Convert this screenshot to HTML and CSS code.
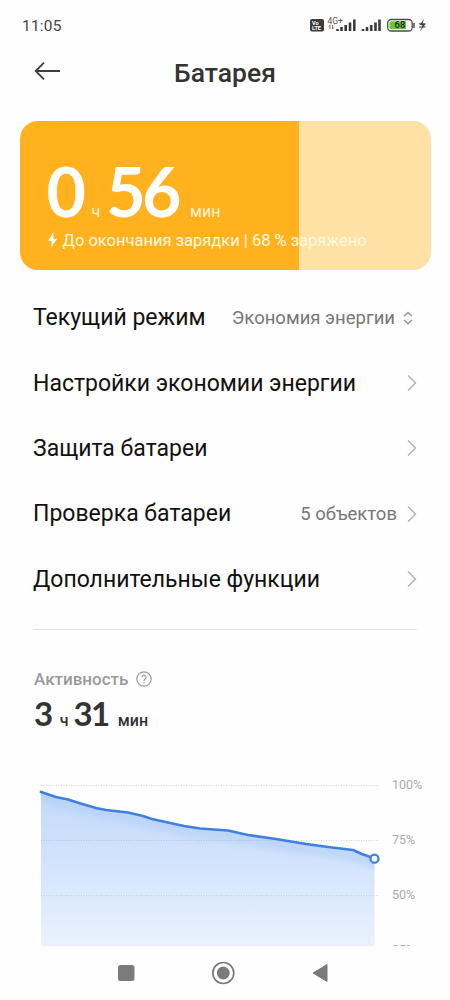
FILE: index.html
```html
<!DOCTYPE html>
<html lang="ru">
<head>
<meta charset="utf-8">
<title>Батарея</title>
<link rel="stylesheet" href="styles.css">
</head>
<body>
<div class="screen">
  <header class="status">
    <span class="clock">11:05</span>
    <svg class="status-icons" width="118" height="20" viewBox="0 0 118 20">
      <rect x="0" y="4" width="14" height="12.500" rx="2" fill="#3c3c3c"/>
      <text class="volte" x="2" y="9.700">Vo</text>
      <text class="volte" x="2" y="15.200">LTE</text>
      <text class="net" x="17.500" y="8.500">4G+</text>
      <path d="M20 10v4M18.700 11.300l1.300-1.500M22.500 10v4l1.400-1.600" stroke="#777" fill="none"/>
      <path d="M27.500 16v-2M31.500 16v-4M35.700 16V10M40 16V7.500M44.300 16V4.500M53 16v-2M57 16v-4M61.200 16V10M65.500 16V7.500M69.500 16V4.500" stroke="#3c3c3c" stroke-width="2.600"/>
      <rect x="77.700" y="4.500" width="24.500" height="11.500" rx="3.500" fill="#fff" stroke="#4b4b4b" stroke-width="1.300"/>
      <path d="M81.500 6.300H96v8H81.500a2 2 0 0 1-2-2v-4a2 2 0 0 1 2-2z" fill="#66c832"/>
      <path d="M104 8v5" stroke="#4b4b4b" stroke-width="1.500"/>
      <text class="charge" x="90" y="13.300">68</text>
      <path d="M114 4l-4.500 6 3 .3-2.500 6 5.500-7-3-.5z" fill="#444"/>
      <path d="M109 8.800h6.500M109 12h6.500" stroke="#444"/>
    </svg>
  </header>

  <div class="titlebar">
    <svg class="back" width="28" height="20" viewBox="0 0 28 20"><path d="M27 10H3M11 1.700L2.700 10l8.300 8.300" fill="none" stroke="#3d3d3d" stroke-width="1.800"/></svg>
    <h1>Батарея</h1>
  </div>

  <section class="card">
    <div class="time"><span class="num">0</span><span class="unit hour">ч</span><span class="num">56</span><span class="unit min">мин</span></div>
    <div class="state">
      <svg width="11" height="16" viewBox="0 0 11 16"><path d="M6.500 0L1 9h3.700L4 15.500 10 6.700H6.300z" fill="#fff"/></svg>
      <span>До окончания зарядки | 68 % заряжено</span>
    </div>
  </section>

  <nav class="menu">
    <div class="row"><span class="label r1">Текущий режим</span><span class="value v1">Экономия энергии</span><svg class="sort" width="10" height="14" viewBox="0 0 10 14"><path d="M1 5l4-3.600L9 5M1 9l4 3.600L9 9" fill="none" stroke="#8999a3" stroke-width="1.500"/></svg></div>
    <div class="row"><span class="label r2">Настройки экономии энергии</span><svg class="chev" width="10" height="18" viewBox="0 0 10 18"><path d="M1 1.500L8.500 9 1 16.500" fill="none" stroke="#b0b0b0" stroke-width="1.400"/></svg></div>
    <div class="row"><span class="label r3">Защита батареи</span><svg class="chev" width="10" height="18" viewBox="0 0 10 18"><path d="M1 1.500L8.500 9 1 16.500" fill="none" stroke="#b0b0b0" stroke-width="1.400"/></svg></div>
    <div class="row"><span class="label r4">Проверка батареи</span><span class="value v4">5 объектов</span><svg class="chev" width="10" height="18" viewBox="0 0 10 18"><path d="M1 1.500L8.500 9 1 16.500" fill="none" stroke="#b0b0b0" stroke-width="1.400"/></svg></div>
    <div class="row"><span class="label r5">Дополнительные функции</span><svg class="chev" width="10" height="18" viewBox="0 0 10 18"><path d="M1 1.500L8.500 9 1 16.500" fill="none" stroke="#b0b0b0" stroke-width="1.400"/></svg></div>
  </nav>

  <section class="activity">
    <div class="caption"><span>Активность</span>
      <svg width="16" height="16" viewBox="0 0 16 16"><circle cx="8" cy="8" r="7.200" fill="none" stroke="#999" stroke-width="1.200"/><path d="M5.900 6.300a2.100 2.100 0 1 1 3.300 1.700C8.300 8.600 8 9 8 9.900M8 11.200v1.300" fill="none" stroke="#999" stroke-width="1.200"/></svg>
    </div>
    <div class="used"><span class="n">3</span><span class="u uh">ч</span><span class="n">31</span><span class="u um">мин</span></div>
  </section>

  <svg class="chart" width="450" height="176" viewBox="0 770 450 176">
    <defs>
      <linearGradient id="fill" x1="0" y1="792" x2="0" y2="946" gradientUnits="userSpaceOnUse">
        <stop offset="0" stop-color="#c3dafa"/><stop offset=".45" stop-color="#d2e3fc"/><stop offset="1" stop-color="#eaf2fe"/>
      </linearGradient>
      <clipPath id="area"><path d="M41 792L56 797 68 799.500 84 804.500 96 808 106 810 128 812.500 143 816 152 819 168 822.500 184 826 200 828.500 228 830.500 248 835 276 839 306 844 332 847.500 353 850 362 854 374.500 858.500V946H41z"/></clipPath>
      <filter id="soft"><feGaussianBlur stdDeviation="3"/></filter>
    </defs>
    <g clip-path="url(#area)">
      <rect x="41" y="780" width="334" height="166" fill="url(#fill)"/>
      <path d="M36 794L68 803 106 813 128 816 152 822 200 832 228 834 276 843 332 851 353 854 380 864" fill="none" stroke="#aacaf4" stroke-opacity=".45" stroke-width="14" filter="url(#soft)"/>
    </g>
    <path d="M41 785.500H379M41 840.500H379M41 895.500H379" stroke="#8492a5" stroke-opacity=".38" stroke-dasharray="1 1.500"/>
    <path d="M41 792L56 797 68 799.500 84 804.500 96 808 106 810 128 812.500 143 816 152 819 168 822.500 184 826 200 828.500 228 830.500 248 835 276 839 306 844 332 847.500 353 850 362 854 374.500 858.500" fill="none" stroke="#3f80e3" stroke-width="2.700" stroke-linejoin="round" stroke-linecap="round"/>
    <circle cx="374.500" cy="858.700" r="4" fill="#fff" stroke="#3f80e3" stroke-width="2.300"/>
    <text class="axis" x="392" y="789.300">100%</text>
    <text class="axis" x="392" y="844.300">75%</text>
    <text class="axis" x="392" y="899.300">50%</text>
    <text class="axis" x="392" y="954.300">25%</text>
  </svg>

  <footer class="nav">
    <svg width="450" height="54" viewBox="0 0 450 54">
      <rect x="118" y="19" width="16.500" height="16" rx="2.500" fill="#7b7b7b"/>
      <circle cx="223.300" cy="27" r="10.500" fill="none" stroke="#7b7b7b" stroke-width="1.700"/><circle cx="223.300" cy="27" r="6.400" fill="#7b7b7b"/>
      <path d="M313 27l14-8.500v17z" fill="#7b7b7b" stroke="#7b7b7b" stroke-linejoin="round"/>
    </svg>
  </footer>
</div>
</body>
</html>
```
FILE: styles.css
```css
* { box-sizing: border-box; }
body { margin: 0; background: #fefefe; font-family: Roboto, "Noto Sans", sans-serif; }
.screen { width: 450px; height: 1000px; overflow: hidden; display: flex; flex-direction: column; }
svg { display: block; flex: none; }
span { white-space: nowrap; }
.status { height: 46px; padding: 15px 22px 0; display: flex; justify-content: space-between; }
.clock { font-size: 15.500px; line-height: 22px; color: #444; letter-spacing: .2px; }
.status-icons { margin-right: 0; }
.volte { font: bold 5.600px Roboto, sans-serif; fill: #fff; }
.net { font: 8.500px Roboto, sans-serif; fill: #555; }
.charge { font: 500 9.500px Roboto, sans-serif; fill: #222; text-anchor: middle; }
.titlebar { height: 75px; display: grid; grid-template-columns: 80px 290px 80px; }
.back { margin: 15px 0 0 33px; }
h1 { margin: 10px 0 0; font-size: 26.500px; line-height: 34px; font-weight: 500; color: #333; text-align: center; }
.card { width: 411px; height: 149px; margin-left: 19.500px; flex: none; border-radius: 18px; background: linear-gradient(90deg, #ffb11e 0 279px, #fde1a5 279px); color: #fff; padding: 31px 27px 0; }
.time { display: flex; align-items: baseline; height: 77px; }
.num { font: 700 68px/77px Lato, sans-serif; letter-spacing: -3.500px; }
.unit { font-size: 16px; color: #fff5d5; }
.hour { margin: 0 6px 0 9px; }
.min { margin-left: 12px; }
.state { display: flex; align-items: center; gap: 5px; height: 22px; font-size: 16.500px; color: #fff9e0; }
.menu { margin: 15px 33px 0; height: 345px; border-bottom: 1px solid #e4e4e4; flex: none; }
.row { height: 65.400px; display: flex; align-items: center; }
.label { font-size: 23px; color: #111; flex: 1; }
.value { font-size: 18.500px; color: #777; }
.chev { margin-left: 10px; }
.sort { margin: 0 4px 0 8px; }
.activity { height: 140px; flex: none; padding: 37px 34px 0; }
.caption { display: flex; align-items: center; gap: 8px; height: 24px; font-size: 17px; font-weight: 500; color: #999; }
.used { display: flex; align-items: baseline; color: #333; height: 44px; }
.n { font: 700 33px/44px Lato, sans-serif; letter-spacing: -1.500px; }
.u { font-size: 16px; font-weight: 500; }
.uh { margin: 0 5px 0 8px; }
.um { margin-left: 9px; }
.axis { font: 12.500px Roboto, sans-serif; fill: #aaa; }
.nav { height: 54px; }
```
